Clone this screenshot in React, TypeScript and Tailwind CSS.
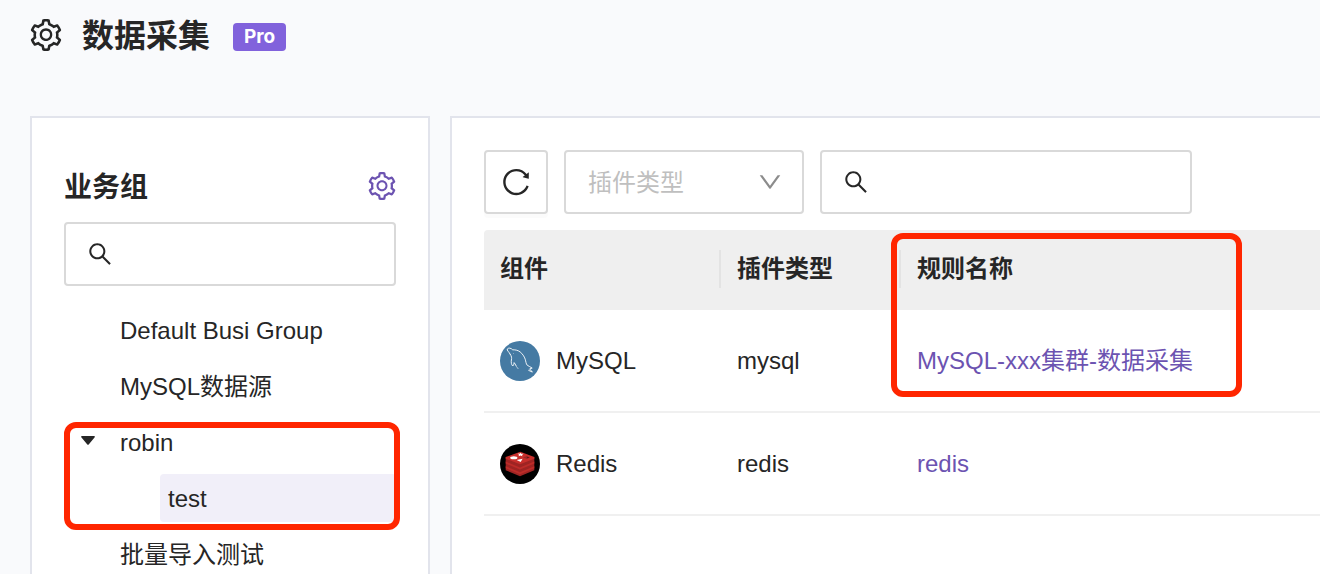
import { useState } from "react";
import type { ReactNode } from "react";
import {
  AiOutlineDown,
  AiOutlineReload,
  AiOutlineSearch,
  AiOutlineSetting,
} from "react-icons/ai";

interface Group {
  id: string;
  name: string;
  children?: Group[];
}

interface Rule {
  id: number;
  component: string;
  icon: ReactNode;
  plugin: string;
  name: string;
}

// trims the empty margin around the icon outlines
const ICON_VIEW_BOX = "64 64 896 896";

const groups: Group[] = [
  { id: "default", name: "Default Busi Group" },
  { id: "mysql", name: "MySQL数据源" },
  { id: "robin", name: "robin", children: [{ id: "robin/test", name: "test" }] },
  { id: "import", name: "批量导入测试" },
];

const rules: Rule[] = [
  {
    id: 1,
    component: "MySQL",
    icon: <MysqlIcon />,
    plugin: "mysql",
    name: "MySQL-xxx集群-数据采集",
  },
  {
    id: 2,
    component: "Redis",
    icon: <RedisIcon />,
    plugin: "redis",
    name: "redis",
  },
];

function MysqlIcon() {
  return (
    <svg viewBox="0 0 40 40" className="size-10 shrink-0" aria-hidden="true">
      <circle cx="20" cy="20" r="20" fill="#457aa3" />
      <g
        fill="none"
        stroke="#fff"
        strokeWidth="0.9"
        strokeLinecap="round"
        strokeLinejoin="round"
      >
        <path d="M10.200 13.200C9.200 11 6.500 9.200 7.300 8c1-1.300 3.600-1.200 5.400.8 2.800-.1 5.600.6 7.500 2.200 2.200 1.800 4 4.300 5 7.200.7 2.200.8 4.600 2 6 1.500 1.200 3.400 1.600 5 2.900l-2.600.8 2.800 3.200-3.700-1.700" />
        <path d="M10.200 13.200c1.600 2.300 1.600 3.800 1.200 5.800-.4 2.300-.1 4.500 1.300 6 .8-.6 1.200-1.600 1.400-3.400.9.8 1.400 2.100 2 3.200" />
        <path d="M16.400 25.500l1.700 2.200" strokeWidth="0.600" />
      </g>
      <circle cx="13.300" cy="12.300" r="0.400" fill="#fff" />
    </svg>
  );
}

function RedisIcon() {
  return (
    <svg viewBox="0 0 40 40" className="size-10 shrink-0" aria-hidden="true">
      <circle cx="20" cy="20" r="20" fill="#000" />
      <path d="M5.700 13v13.200L20 32.200l14.300-6V13L20 19z" fill="#9e2423" />
      <path d="M5.700 22.300L20 28.300l14.300-6v2L20 30.300l-14.300-6z" fill="#bd2c29" />
      <path d="M5.700 17.600L20 23.600l14.300-6v2L20 25.600l-14.300-6z" fill="#bd2c29" />
      <path d="M20.300 7.700L34.300 13v1.700L20 20.300 5.700 14.700V13z" fill="#c82f2c" />
      <ellipse cx="13.800" cy="13.700" rx="3.600" ry="1.500" fill="#fff" />
      <path d="M17.600 9.400l2 .4.900-1 .6 1 2.400-.1-1.400 1.200.2 1.300-1.800-.6-1.900.7.400-1.500z" fill="#fff" />
      <path d="M16.600 15.900l6-1.100-1.900 3.300z" fill="#fff" />
      <path d="M26.500 12.200l3.300 1.300-3.300 1.300z" fill="#621b1c" />
      <path d="M23 13.500l3.500-1.300v2.600z" fill="#9a2928" />
    </svg>
  );
}

function SearchBox({
  label,
  className,
}: {
  label: string;
  className: string;
}) {
  const [value, setValue] = useState("");

  return (
    <label
      className={`flex h-16 items-center gap-2 rounded-sm border-2 border-[#d9d9d9] bg-white px-[22px] ${className}`}
    >
      <AiOutlineSearch viewBox={ICON_VIEW_BOX} className="size-6 shrink-0" />
      <input
        type="text"
        aria-label={label}
        value={value}
        onChange={(e) => setValue(e.target.value)}
        className="min-w-0 flex-1 outline-none"
      />
    </label>
  );
}

function GroupTree() {
  const [selected, setSelected] = useState("robin/test");
  const [open, setOpen] = useState(true);

  function renderNode(group: Group) {
    return (
      <button
        type="button"
        onClick={() => setSelected(group.id)}
        className={`h-12 flex-1 cursor-pointer rounded-sm px-2 pt-0.5 text-left ${
          selected === group.id ? "bg-[#f1eff9]" : ""
        }`}
      >
        {group.name}
      </button>
    );
  }

  return (
    <ul className="mt-5 flex flex-col gap-2">
      {groups.map((group) => (
        <li key={group.id} className="relative flex flex-col gap-2">
          <div className="flex">
            {group.children ? (
              <button
                type="button"
                aria-label={group.name}
                aria-expanded={open}
                onClick={() => setOpen(!open)}
                className="flex h-11 w-12 cursor-pointer items-center justify-center"
              >
                <svg viewBox="0 0 14 9" className="h-[9px] w-3.5" fill="currentColor">
                  <path d="M1 0h12c.8 0 1.200.700.700 1.300L7.700 8.400c-.4.500-1 .5-1.400 0L.3 1.300C-.2.7.2 0 1 0z" />
                </svg>
              </button>
            ) : (
              <span className="w-12" />
            )}
            {renderNode(group)}
          </div>
          {open &&
            group.children?.map((child) => (
              <div key={child.id} className="flex pl-24">
                {renderNode(child)}
              </div>
            ))}
          {group.children && (
            <span className="pointer-events-none absolute top-1 -right-1 -bottom-2 left-0 rounded-xl border-6 border-[#ff2600]" />
          )}
        </li>
      ))}
    </ul>
  );
}

function RuleTable() {
  return (
    <div className="relative mt-4">
      <table className="w-full table-fixed border-collapse text-left">
        <colgroup>
          <col className="w-[237px]" />
          <col className="w-[180px]" />
          <col />
        </colgroup>
        <thead>
          <tr className="h-20 bg-[#efefef]">
            <th className="rounded-tl-sm p-0 pb-0.5 font-semibold">
              <div className="border-r-2 border-[#e3e3e3] px-4 leading-[38px]">组件</div>
            </th>
            <th className="p-0 pb-0.5 font-semibold">
              <div className="border-r-2 border-[#e3e3e3] px-4 leading-[38px]">插件类型</div>
            </th>
            <th className="p-0 pb-0.5 font-semibold">
              <div className="px-4 leading-[38px]">规则名称</div>
            </th>
          </tr>
        </thead>
        <tbody>
          {rules.map((rule) => (
            <tr
              key={rule.id}
              className="h-[103px] shadow-[inset_0_-2px_0_#f0f0f0]"
            >
              <td className="px-4 pt-0 pb-0.5">
                <div className="flex items-center gap-4">
                  {rule.icon}
                  {rule.component}
                </div>
              </td>
              <td className="px-4 pt-0 pb-0.5">{rule.plugin}</td>
              <td className="px-4 pt-0 pb-0.5">
                <a href="#" className="text-[#6c53b1]">
                  {rule.name}
                </a>
              </td>
            </tr>
          ))}
        </tbody>
      </table>
      <span className="pointer-events-none absolute top-[3px] left-[407px] h-[164px] w-[351px] rounded-xl border-6 border-[#ff2600]" />
    </div>
  );
}

export default function App() {
  return (
    <div className="flex h-screen flex-col overflow-hidden bg-[#f9fafc] font-['Liberation_Sans','Noto_Sans_CJK_SC',sans-serif] text-2xl text-[#262626]">
      <header className="flex h-[70px] shrink-0 items-center px-[30px]">
        <AiOutlineSetting viewBox={ICON_VIEW_BOX} className="size-8" />
        <h1 className="ml-5 pt-0.5 text-[32px] leading-10 font-semibold">数据采集</h1>
        <span className="mt-1 ml-[23px] rounded-sm bg-[#8162dc] px-[11px] font-['Inter',sans-serif] text-[19px] leading-7 font-bold text-white">
          Pro
        </span>
      </header>

      <div className="mt-[46px] flex min-h-0 flex-1 gap-5 pl-[30px]">
        <aside className="w-[400px] shrink-0 border-2 border-b-0 border-[#e2e4ec] bg-white px-8 pt-12">
          <div className="flex h-10 items-center justify-between">
            <h2 className="pt-1 text-[28px] leading-10 font-semibold">业务组</h2>
            <button type="button" aria-label="设置" className="cursor-pointer text-[#6c53b1]">
              <AiOutlineSetting viewBox={ICON_VIEW_BOX} className="size-7" />
            </button>
          </div>
          <SearchBox label="搜索业务组" className="mt-4" />
          <GroupTree />
        </aside>

        <main className="min-w-0 flex-1 border-t-2 border-l-2 border-[#e2e4ec] bg-white pt-8 pl-8">
          <div className="flex gap-4">
            <button
              type="button"
              aria-label="刷新"
              className="flex size-16 cursor-pointer items-center justify-center rounded-sm border-2 border-[#d9d9d9] shadow-[0_4px_0_rgba(0,0,0,0.015)]"
            >
              <AiOutlineReload viewBox={ICON_VIEW_BOX} className="size-7" />
            </button>
            <div className="relative">
              <select
                aria-label="插件类型"
                defaultValue=""
                className="h-16 w-60 appearance-none rounded-sm border-2 border-[#d9d9d9] bg-white px-[22px] pt-0.5 text-[#bfbfbf] outline-none"
              >
                <option value="">插件类型</option>
                <option value="mysql">mysql</option>
                <option value="redis">redis</option>
              </select>
              <AiOutlineDown
                viewBox={ICON_VIEW_BOX}
                className="pointer-events-none absolute top-5 right-[22px] size-6 text-[#8c8c8c]"
              />
            </div>
            <SearchBox label="搜索规则" className="w-[372px]" />
          </div>
          <RuleTable />
        </main>
      </div>
    </div>
  );
}
